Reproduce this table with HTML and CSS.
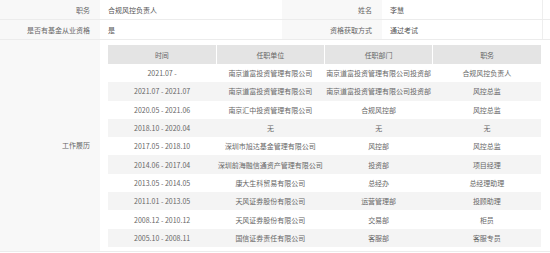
FILE: index.html
```html
<!DOCTYPE html>
<html lang="zh">
<head>
<meta charset="utf-8">
<link rel="stylesheet" href="styles.css">
</head>
<body>
<div class="info">
  <div class="row">
    <div class="label">职务</div>
    <div class="value">合规风控负责人</div>
    <div class="label">姓名</div>
    <div class="value end">李慧</div>
  </div>
  <div class="row">
    <div class="label">是否有基金从业资格</div>
    <div class="value">是</div>
    <div class="label">资格获取方式</div>
    <div class="value end">通过考试</div>
  </div>
  <div class="row last">
    <div class="label mid">工作履历</div>
    <div class="value span">
      <table class="history">
        <thead>
          <tr><th>时间</th><th>任职单位</th><th>任职部门</th><th>职务</th></tr>
        </thead>
        <tbody>
          <tr><td>2021.07 -</td><td>南京道富投资管理有限公司</td><td>南京道富投资管理有限公司投资部</td><td>合规风控负责人</td></tr>
          <tr><td>2021.07 - 2021.07</td><td>南京道富投资管理有限公司</td><td>南京道富投资管理有限公司投资部</td><td>风控总监</td></tr>
          <tr><td>2020.05 - 2021.06</td><td>南京汇中投资管理有限公司</td><td>合规风控部</td><td>风控总监</td></tr>
          <tr><td>2018.10 - 2020.04</td><td>无</td><td>无</td><td>无</td></tr>
          <tr><td>2017.05 - 2018.10</td><td>深圳市旭达基金管理有限公司</td><td>风控部</td><td>风控总监</td></tr>
          <tr><td>2014.06 - 2017.04</td><td>深圳前海融信通资产管理有限公司</td><td>投资部</td><td>项目经理</td></tr>
          <tr><td>2013.05 - 2014.05</td><td>康大生科贸易有限公司</td><td>总经办</td><td>总经理助理</td></tr>
          <tr><td>2011.01 - 2013.05</td><td>天风证券股份有限公司</td><td>运营管理部</td><td>投顾助理</td></tr>
          <tr><td>2008.12 - 2010.12</td><td>天风证券股份有限公司</td><td>交易部</td><td>柜员</td></tr>
          <tr><td>2005.10 - 2008.11</td><td>国信证券责任有限公司</td><td>客服部</td><td>客服专员</td></tr>
        </tbody>
      </table>
    </div>
  </div>
</div>
</body>
</html>
```

FILE: styles.css
```css
html, body {
  margin: 0;
  padding: 0;
  background: #ffffff;
}
body {
  font-family: "Noto Sans CJK SC", "Noto Sans", sans-serif;
  font-size: 7px;
  color: #666666;
}
.info {
  width: 550px;
}
.row {
  display: grid;
  grid-template-columns: 100px 182px 100px 161px;
  border-bottom: 1px solid #ececec;
}
.row > div {
  display: flex;
  align-items: center;
  height: 19px;
}
.label {
  background: #f8f8f8;
  justify-content: flex-end;
  padding-right: 10px;
  color: #666666;
}
.value {
  padding-left: 8px;
  color: #555555;
}
.value.end {
  border-right: 1px solid #eeeeee;
}
.row.last {
  grid-template-columns: 100px 1fr;
}
.row.last > div {
  height: auto;
}
.value.span {
  padding: 5px 8px 4px 8px;
}
.history {
  width: 433px;
  border-collapse: collapse;
  table-layout: fixed;
  font-size: 7px;
  color: #666666;
}
.history th {
  background: #e4e4e4;
  font-weight: normal;
  height: 19px;
  padding: 0;
  border-right: 1px solid #ffffff;
  text-align: center;
}
.history th:last-child {
  border-right: none;
}
.history td {
  height: 18.3px;
  padding: 0;
  text-align: center;
  white-space: nowrap;
}
.history tbody tr:nth-child(even) td {
  background: #f4f4f4;
}
```
